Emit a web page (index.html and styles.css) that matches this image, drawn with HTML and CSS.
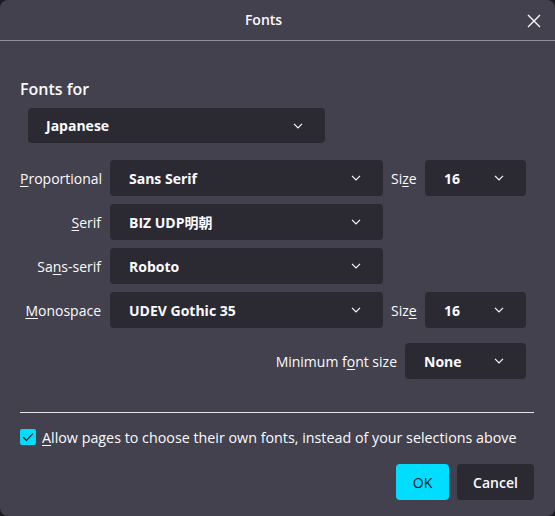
FILE: index.html
```html
<!DOCTYPE html>
<html lang="en">
<head>
<meta charset="utf-8">
<title>Fonts</title>
<link rel="stylesheet" href="styles.css">
</head>
<body>
<div class="dialog">
  <header class="titlebar">
    <h1 class="title">Fonts</h1>
    <button class="close" aria-label="Close">
      <svg width="14" height="14" viewBox="0 0 14 14"><path d="M1 1L13 13M13 1L1 13" stroke="#fbfbfe" stroke-width="1.4" fill="none"/></svg>
    </button>
  </header>
  <main class="content">
    <h2 class="section-title">Fonts for</h2>
    <div class="select lang"><span>Japanese</span><svg class="chev" width="10" height="6" viewBox="0 0 10 6"><path d="M1 0.8L5 4.8L9 0.8" stroke="#fbfbfe" stroke-width="1.2" fill="none"/></svg></div>

    <div class="font-grid">
      <label class="lbl"><u>P</u>roportional</label>
      <div class="select"><span>Sans Serif</span><svg class="chev" width="10" height="6" viewBox="0 0 10 6"><path d="M1 0.8L5 4.8L9 0.8" stroke="#fbfbfe" stroke-width="1.2" fill="none"/></svg></div>
      <label class="size-lbl">Si<u>z</u>e</label>
      <div class="select"><span>16</span><svg class="chev" width="10" height="6" viewBox="0 0 10 6"><path d="M1 0.8L5 4.8L9 0.8" stroke="#fbfbfe" stroke-width="1.2" fill="none"/></svg></div>

      <label class="lbl"><u>S</u>erif</label>
      <div class="select"><span>BIZ UDP明朝</span><svg class="chev" width="10" height="6" viewBox="0 0 10 6"><path d="M1 0.8L5 4.8L9 0.8" stroke="#fbfbfe" stroke-width="1.2" fill="none"/></svg></div>
      <span></span><span></span>

      <label class="lbl">Sa<u>n</u>s-serif</label>
      <div class="select"><span>Roboto</span><svg class="chev" width="10" height="6" viewBox="0 0 10 6"><path d="M1 0.8L5 4.8L9 0.8" stroke="#fbfbfe" stroke-width="1.2" fill="none"/></svg></div>
      <span></span><span></span>

      <label class="lbl"><u>M</u>onospace</label>
      <div class="select"><span>UDEV Gothic 35</span><svg class="chev" width="10" height="6" viewBox="0 0 10 6"><path d="M1 0.8L5 4.8L9 0.8" stroke="#fbfbfe" stroke-width="1.2" fill="none"/></svg></div>
      <label class="size-lbl">Siz<u>e</u></label>
      <div class="select"><span>16</span><svg class="chev" width="10" height="6" viewBox="0 0 10 6"><path d="M1 0.8L5 4.8L9 0.8" stroke="#fbfbfe" stroke-width="1.2" fill="none"/></svg></div>
    </div>

    <div class="min-row">
      <label class="min-lbl">Minimum f<u>o</u>nt size</label>
      <div class="select min-sel"><span>None</span><svg class="chev" width="10" height="6" viewBox="0 0 10 6"><path d="M1 0.8L5 4.8L9 0.8" stroke="#fbfbfe" stroke-width="1.2" fill="none"/></svg></div>
    </div>

    <hr class="sep">

    <div class="check-row">
      <span class="checkbox"><svg width="16" height="16" viewBox="0 0 16 16"><path d="M3.2 8.2L6.5 11.4L12.8 4.6" stroke="#1c1b22" stroke-width="1.3" fill="none"/></svg></span>
      <span class="check-text"><u>A</u>llow pages to choose their own fonts, instead of your selections above</span>
    </div>

    <div class="buttons">
      <button class="btn primary">OK</button>
      <button class="btn">Cancel</button>
    </div>
  </main>
</div>
</body>
</html>
```
FILE: styles.css
```css
* { box-sizing: border-box; }
html, body {
  margin: 0;
  padding: 0;
  width: 555px;
  height: 516px;
  background: #1c1b22;
  overflow: hidden;
}
body {
  font-family: "Open Sans", "Noto Sans CJK JP", sans-serif;
  color: #fbfbfe;
  font-size: 14px;
}
.dialog {
  width: 555px;
  height: 516px;
  background: #42414d;
  border-radius: 8px;
  display: flex;
  flex-direction: column;
}
.titlebar {
  height: 41px;
  border-bottom: 1px solid #8f8f9d;
  display: flex;
  align-items: center;
  justify-content: center;
  position: relative;
}
.title {
  margin: 0 0 0 -28px;
  font-size: 14px;
  font-weight: 600;
  line-height: 20px;
}
.close {
  position: absolute;
  right: 13px;
  top: 13px;
  width: 16px;
  height: 16px;
  padding: 0;
  background: none;
  border: 0;
  display: flex;
  align-items: center;
  justify-content: center;
}
.content {
  padding: 0 21px 0 20px;
  display: flex;
  flex-direction: column;
}
.section-title {
  margin: 37px 0 0 0;
  font-size: 16px;
  font-weight: 600;
  line-height: 22px;
}
.select {
  height: 36px;
  background: #2b2a33;
  border-radius: 4px;
  display: flex;
  align-items: center;
  justify-content: space-between;
  padding: 0 22px 0 19px;
  font-weight: 700;
  font-size: 14px;
}
.chev { flex: none; }
.lang {
  margin: 8px 0 0 8px;
  width: 297px;
  height: 35px;
  padding-left: 18px;
}
.font-grid {
  margin-top: 17px;
  display: grid;
  grid-template-columns: 82px 273px 26px 101px;
  column-gap: 8px;
  row-gap: 8px;
  align-items: center;
}
.lbl {
  text-align: right;
  white-space: nowrap;
  padding-right: 1px;
}
.size-lbl { white-space: nowrap; }
u { text-decoration-thickness: 1px; text-underline-offset: 2px; }
.min-row {
  margin-top: 15px;
  width: 506px;
  display: flex;
  justify-content: flex-end;
  align-items: center;
  gap: 8px;
}
.min-sel { width: 121px; padding-left: 19px; }
.sep {
  margin: 33px 0 0 0;
  border: 0;
  border-top: 1px solid #e6e6ea;
  height: 0;
  width: 514px;
}
.check-row {
  margin-top: 16px;
  display: flex;
  align-items: center;
  gap: 6px;
  height: 16px;
}
.checkbox {
  width: 16px;
  height: 16px;
  background: #00ddff;
  border-radius: 2px;
  display: block;
  flex: none;
}
.checkbox svg { display: block; }
.check-text { white-space: nowrap; line-height: 16px; font-size: 14.3px; padding-top: 2px; }
.buttons {
  margin-top: 19px;
  display: flex;
  justify-content: flex-end;
  gap: 8px;
}
.btn {
  height: 36px;
  border: 0;
  border-radius: 4px;
  background: #2b2a33;
  color: #fbfbfe;
  font-family: inherit;
  font-size: 14px;
  font-weight: 600;
  padding: 0 16px;
  min-width: 53px;
}
.btn.primary {
  background: #00ddff;
  color: #15141a;
  font-weight: 400;
  width: 53px;
}
.btn:not(.primary) { width: 77px; }
```
